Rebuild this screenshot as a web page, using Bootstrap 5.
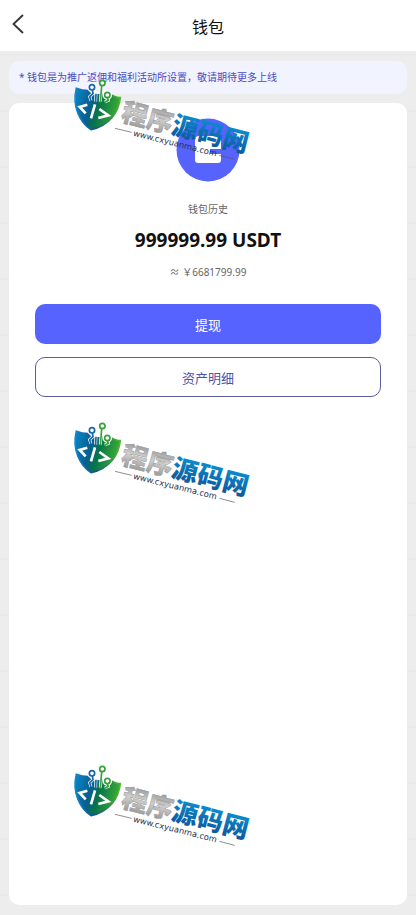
<!DOCTYPE html>
<html lang="zh-CN">
<head>
<meta charset="utf-8">
<meta name="viewport" content="width=device-width, initial-scale=1">
<title>钱包</title>
<link href="https://cdn.jsdelivr.net/npm/bootstrap@5.3.0/dist/css/bootstrap.min.css" rel="stylesheet">
<style>
body { font-family: "Noto Sans", "Noto Sans CJK SC", sans-serif; background: repeating-linear-gradient(#ededed 0 54px, #eaeaea 54px 56px); color: #111; }
.topbar { height: 51px; padding-top: 2px; }
.back { left: 8px; top: 10px; width: 24px; height: 28px; line-height: 0; }
.page-title { font-size: 16px; line-height: 24px; }
.content { padding: 10px 9px; gap: 9px; }
.notice { background: #f1f3fe; color: #4a4cc4; border-radius: 10px; font-size: 10px; line-height: 17px; padding: 8px 10px; }
.wallet { border-radius: 10px; padding: 15px 26px; }
.coin { width: 64px; height: 64px; }
.caption { font-size: 10px; line-height: 16px; color: #666; margin-top: 19px; }
.amount { font-size: 19px; line-height: 28px; margin-top: 9px; }
.fiat { font-size: 10px; line-height: 16px; color: #666; margin-top: 10px; margin-bottom: 24px; }
.action { height: 40px; border-radius: 10px; font-size: 13px; padding: 3px 0 0; }
.action-fill, .action-fill:hover { background: #5663ff; color: #fff; }
.action-line { border: 1px solid #5a5e9c; color: #4f52ab; margin-top: 13px; }
.stamps { left: 60px; top: 75px; gap: 243px; pointer-events: none; }
.stamp { width: 210px; height: 100px; }
.stamp-name { font: 900 78px "Noto Sans CJK SC", sans-serif; }
.stamp-url { font: 25px "DejaVu Sans", sans-serif; fill: #243352; }
</style>
</head>
<body class="position-relative min-vh-100 d-flex flex-column">
<header class="topbar bg-white position-relative d-flex align-items-center justify-content-center">
  <button type="button" class="back btn p-0 border-0 position-absolute" aria-label="返回">
    <svg width="24" height="28" fill="none" stroke="#333" stroke-width="1.8"><path d="M15 5 5.500 14 15 23"/></svg>
  </button>
  <h1 class="page-title fw-normal m-0">钱包</h1>
</header>
<main class="content flex-grow-1 d-flex flex-column">
  <div class="notice">* 钱包是为推广返佣和福利活动所设置，敬请期待更多上线</div>
  <section class="wallet bg-white flex-grow-1 d-flex flex-column text-center">
    <svg class="coin mx-auto" viewBox="0 0 64 64" aria-hidden="true">
      <circle cx="32" cy="32" r="31.500" fill="#5663ff"/>
      <path fill="#fff" d="M23 18h19q3 0 3 3v10H34v5h11v6q0 3-3 3H22q-3 0-3-3V22q0-4 4-4z"/>
    </svg>
    <div class="caption">钱包历史</div>
    <div class="amount fw-bold">999999.99 USDT</div>
    <div class="fiat">≈ ￥6681799.99</div>
    <button type="button" class="action action-fill btn border-0 w-100">提现</button>
    <button type="button" class="action action-line btn w-100">资产明细</button>
  </section>
</main>
<div class="stamps position-absolute d-flex flex-column" aria-hidden="true">
  <svg class="stamp" viewBox="0 0 630 300">
    <defs>
      <linearGradient id="shieldFill" x1="0" y1="0" x2="1" y2=".25"><stop offset="0" stop-color="#078ac9"/><stop offset=".4" stop-color="#075e91"/><stop offset=".6" stop-color="#067449"/><stop offset="1" stop-color="#39aa35"/></linearGradient>
      <linearGradient id="shieldEdge"><stop offset="0" stop-color="#1687cb"/><stop offset=".45" stop-color="#12508e"/><stop offset="1" stop-color="#52b82d"/></linearGradient>
      <linearGradient id="silver" x1="0" y1="0" x2="0" y2="1"><stop offset=".1" stop-color="#8a8a8a"/><stop offset=".5" stop-color="#d0d0d0"/><stop offset="1" stop-color="#8a8a8a"/></linearGradient>
      <linearGradient id="azure" x1="0" y1="0" x2="0" y2="1"><stop offset=".2" stop-color="#0c8dcd"/><stop offset="1" stop-color="#0c4f96"/></linearGradient>
      <g id="stampArt">
        <path d="M49 40Q67 47 84 47L92 58 108 60 150 56Q165 69 181 68C176 111 150 151 93 164 59 142 36 94 49 40Z" fill="url(#shieldFill)" stroke="url(#shieldEdge)" stroke-width="5"/>
        <g fill="none" stroke="#fff" stroke-width="9"><path d="M98 44 100 55 89 65 93 77M108 50 107 80M125 31 121 80M142 67 145 76 134 81"/><circle cx="96" cy="37" r="10"/><circle cx="142" cy="60" r="10"/></g>
        <g fill="none" stroke-width="5"><path stroke="#1766a7" d="M97 45 99 56 89 65 93 78M108 56 107 82"/><circle stroke="#1766a7" cx="96" cy="37" r="8" fill="#fff"/><path stroke="#35a13a" d="M125 33 121 83M141 67 145 76 134 82"/><circle stroke="#35a13a" cx="127" cy="24" r="8" fill="#fff"/><circle stroke="#35a13a" cx="142" cy="60" r="8" fill="#fff"/></g>
        <path d="M82 89 59 96 77 115M105 88 93 130M118 102 145 121 115 129" fill="none" stroke="#fff" stroke-width="8"/>
        <g transform="translate(180 136) rotate(14.500)">
          <text class="stamp-name" fill="url(#silver)"><tspan stroke="#999" stroke-width="1.500">程序</tspan><tspan fill="url(#azure)">源码网</tspan></text>
        </g>
        <text class="stamp-url" transform="translate(218 182) rotate(14)">www.cxyuanma.com</text>
        <path d="M165 160 215 172M478 241 524 253" stroke="#555" stroke-width="2"/>
      </g>
    </defs>
    <use href="#stampArt"/>
  </svg>
  <svg class="stamp" viewBox="0 0 630 300"><use href="#stampArt"/></svg>
  <svg class="stamp" viewBox="0 0 630 300"><use href="#stampArt"/></svg>
</div>
<script src="https://cdn.jsdelivr.net/npm/bootstrap@5.3.0/dist/js/bootstrap.bundle.min.js"></script>
</body>
</html>
